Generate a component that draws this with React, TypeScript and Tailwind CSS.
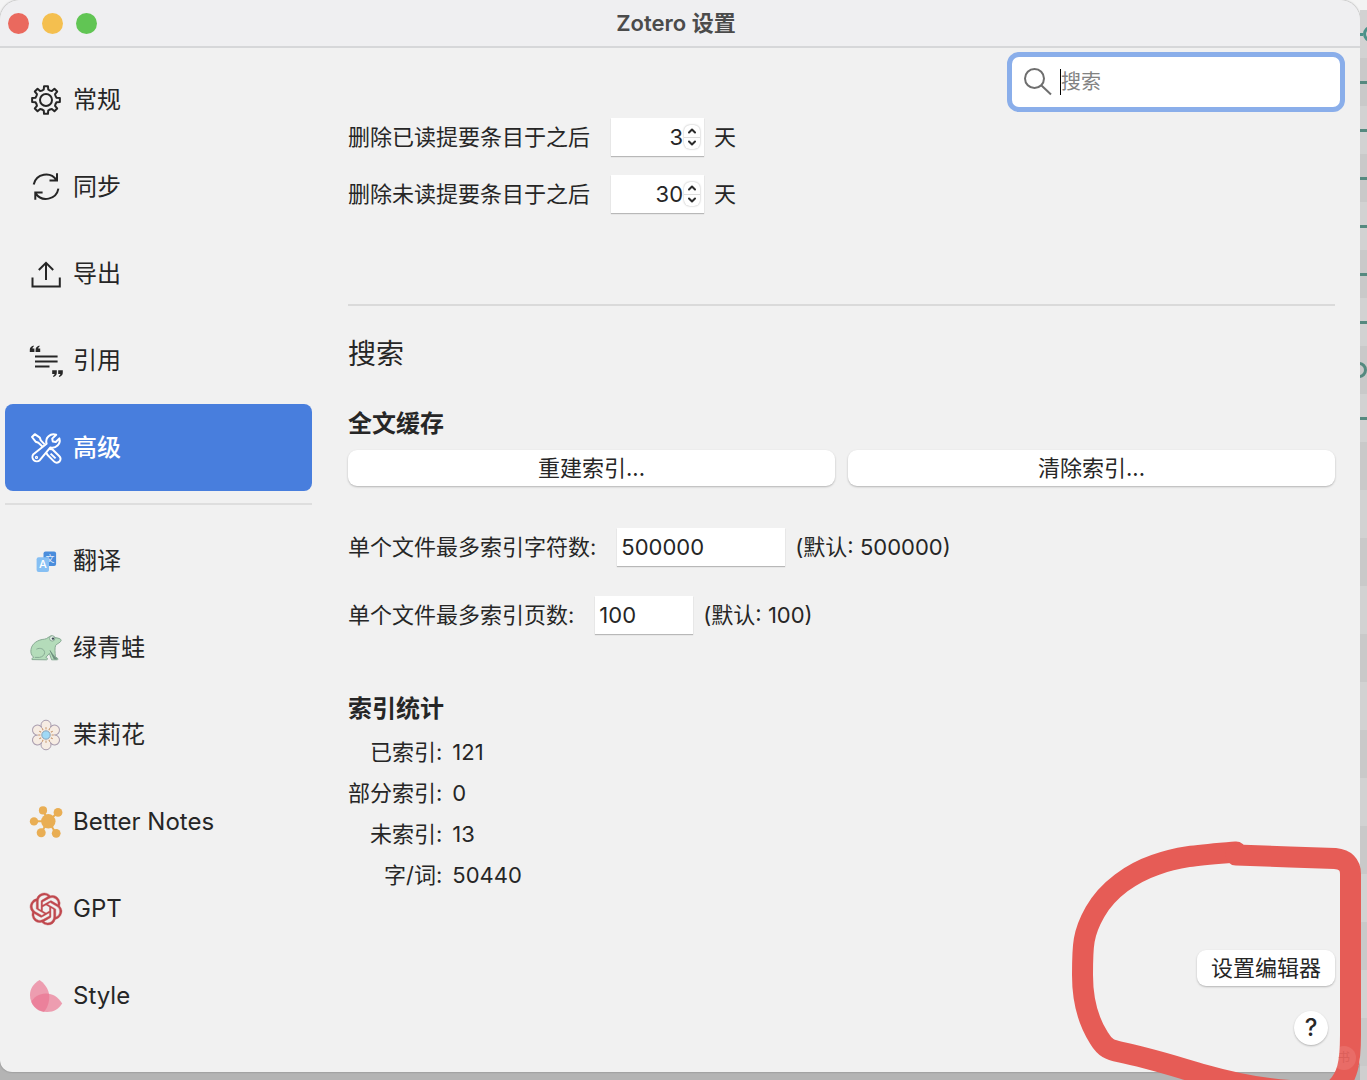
import { useState } from 'react';
import type { ReactNode } from 'react';
import { SiOpenai } from 'react-icons/si';

// 8-tooth outline centred in a 32px box
function gearPath() {
    const point = (r: number, deg: number) => {
        const a = (deg * Math.PI) / 180;
        return `${(16 + r * Math.sin(a)).toFixed(2)} ${(16 - r * Math.cos(a)).toFixed(2)}`;
    };
    const parts: string[] = [];
    for (let i = 0; i < 8; i++) {
        const a = i * 45;
        parts.push(`${i === 0 ? 'M' : 'L'}${point(10.8, a - 12)}`);
        parts.push(`L${point(14, a - 8)}`, `L${point(14, a + 8)}`, `L${point(10.8, a + 12)}`);
        parts.push(`Q${point(10, a + 22.5)} ${point(10.8, a + 33)}`);
    }
    return parts.join('') + 'Z';
}

function Icon({ children, className = '' }: { children: ReactNode; className?: string }) {
    return (
        <svg
            className={`w-8 h-8 flex-shrink-0 overflow-visible ${className}`}
            viewBox="0 0 32 32"
            fill="none"
            stroke="currentColor"
            strokeWidth={2}
            strokeLinejoin="round"
            aria-hidden="true"
        >
            {children}
        </svg>
    );
}

const GeneralIcon = () => (
    <Icon>
        <path d={gearPath()} />
        <circle cx="16" cy="16" r="6" />
    </Icon>
);

const SyncIcon = () => (
    <Icon>
        <path strokeLinejoin="miter" d="M3.7 13.5A12.6 12.6 0 0 1 26.6 9.4M27 2.3V9.6H19.5" />
        <path strokeLinejoin="miter" d="M28.4 17.6A12.6 12.6 0 0 1 5.6 22.4M5.3 28.8V21.6H12.6" />
    </Icon>
);

const ExportIcon = () => (
    <Icon>
        <path strokeLinejoin="miter" d="M16 22V5M8.8 12L16 4.8L23.2 12M2.5 19.6V28.5H29.8V19.6" />
    </Icon>
);

const CiteIcon = () => (
    <Icon>
        <path d="M5 11.6H27.6M5 16.6H27.6M5 21.6H19.5" />
        <path
            fill="currentColor"
            stroke="none"
            d="M3.6 0.6C1 1.4 -0.2 2.8 -0.2 4.8V7H4.4V3.4H2.4C2.5 2.6 3 2 3.8 1.6ZM9.4 0.6C6.8 1.4 5.6 2.8 5.6 4.8V7H10.2V3.4H8.2C8.3 2.6 8.8 2 9.6 1.6Z"
        />
        <path
            fill="currentColor"
            stroke="none"
            d="M22.2 25.2H26.8V27.8C26.8 29.8 25.8 31.2 23.4 32L23 31C24 30.4 24.5 29.8 24.6 29H22.2ZM28.2 25.2H32.8V27.8C32.8 29.8 31.6 31.2 29.2 32L28.8 31C29.8 30.4 30.3 29.8 30.4 29H28.2Z"
        />
    </Icon>
);

const AdvancedIcon = () => (
    <Icon>
        <path d="M26.2 2.8L22.2 6.6L22.8 9.6L25.8 10L29.4 6.4A7.3 7.3 0 0 1 20.4 15.4L9.8 28.2A4.4 4.4 0 0 1 3.4 22.2L16.6 11.8A7.3 7.3 0 0 1 26.2 2.8Z" />
        <circle cx="6.5" cy="25.4" r="0.6" />
        <path d="M12.4 14.4L8.4 10.8L5.8 9.8L2 5L4.8 2.2L9.8 5.6L10.8 8.4L14.6 12.4" />
        <path d="M19.4 17.6C20.4 16.6 22 17 22.8 17.8L29.4 24.2A3.7 3.7 0 0 1 24.2 29.6L17.6 23C16.6 22 16.4 21.4 17 20.4M20.6 21.6L25.6 26.4" />
    </Icon>
);

const TranslateIcon = () => (
    <Icon>
        <g stroke="none">
            <rect x="13.5" y="6.6" width="12.6" height="14.4" rx="2" fill="#4a8ddc" />
            <text x="15.4" y="16.6" fontSize="9" fill="#e4effb">文</text>
            <rect x="6.6" y="12.2" width="12.4" height="14.8" rx="2" fill="#86bff3" />
            <text x="9" y="23.4" fontSize="11" fontWeight="500" fill="#ffffff">A</text>
        </g>
    </Icon>
);

const FrogIcon = () => (
    <Icon>
        <g stroke="#88aa94" strokeWidth={1}>
            <path
                fill="#b4dcba"
                d="M2 27.6C1.6 26.4 2.6 25.6 3.8 25.4C1.4 23.4 0.4 20.6 1 17.4C2 11 8.4 7.6 14.4 7.2C17.4 7 18.6 4.4 21.4 3.8L25 5.6C27.6 6 31 6.6 31.2 8.2C31 10.6 27.2 11.4 25.6 13.4C24.6 16.4 25 20 25.4 24.6L28 26.8C28.2 27.6 27.6 27.8 26.8 27.8H21.6L19.4 21.4L15.8 25.4L17.4 26.4C17.6 27.4 17.2 27.8 16.4 27.8Z"
            />
            <path d="M6.4 17.2C10 15.2 14.4 17 14.6 20.4C14.6 23 12.6 24.8 9.6 25.4H5" />
            <path d="M20 18.4L24.2 27H27" fill="#6f9180" stroke="#6f9180" />
            <circle cx="22.2" cy="6.4" r="2.7" fill="#e3eee6" />
            <circle cx="23" cy="6.6" r="1.2" fill="#3c4a55" stroke="none" />
        </g>
    </Icon>
);

const FlowerIcon = () => {
    const turns = [0, 60, 120, 180, 240, 300];
    return (
        <Icon>
            {turns.map(a => (
                <circle key={a} cx="16" cy="6.2" r="5" fill="#f6ece3" stroke="#a99dae" strokeWidth={1} transform={`rotate(${a} 16 16)`} />
            ))}
            <circle cx="16" cy="16" r="8.4" fill="#f6ece3" stroke="none" />
            {[...turns, 30, 90, 150, 210, 270, 330].map(a => (
                <path key={a} d="M16 10.4V8.2" stroke="#c4946a" strokeWidth={1} transform={`rotate(${a} 16 16)`} />
            ))}
            <circle cx="16" cy="16" r="4.2" fill="#9fd9f6" stroke="#8ba3b8" strokeWidth={1} />
        </Icon>
    );
};

const NotesIcon = () => (
    <Icon className="text-[#e9ae54]">
        <path d="M18.3 15.3L13 4.3M18.3 15.3L28 6.3M18.3 15.3H4M18.3 15.3L11 26.7M18.3 15.3L26 27.3" />
        <g fill="currentColor" stroke="none">
            <circle cx="18.3" cy="15.3" r="7.2" />
            <circle cx="13" cy="4.4" r="4.1" />
            <circle cx="28" cy="6.4" r="4.4" />
            <circle cx="4" cy="15.4" r="4.2" />
            <circle cx="11.2" cy="26.7" r="4.5" />
            <circle cx="26.2" cy="27.3" r="4.4" />
        </g>
    </Icon>
);

const StyleIcon = () => (
    <Icon>
        <g fill="#eb7490" fillOpacity={0.68} stroke="none">
            <path d="M9.5 0C3 4 0 9 0 15C0 24 6 31 14 32C18 27 20 20 19 14C18 8 14 3 9.5 0Z" />
            <path d="M32.2 23.5C28 17 23 13.5 16 13.5C9 13.5 3.4 17.4 1.4 22C4 28 10 32 17 32C24 32 29 28.5 32.2 23.5Z" />
        </g>
    </Icon>
);

interface Pane {
    id: string;
    label: string;
    icon: ReactNode;
}

const builtinPanes: Pane[] = [
    { id: 'general', label: '常规', icon: <GeneralIcon /> },
    { id: 'sync', label: '同步', icon: <SyncIcon /> },
    { id: 'export', label: '导出', icon: <ExportIcon /> },
    { id: 'cite', label: '引用', icon: <CiteIcon /> },
    { id: 'advanced', label: '高级', icon: <AdvancedIcon /> },
];

const pluginPanes: Pane[] = [
    { id: 'translate', label: '翻译', icon: <TranslateIcon /> },
    { id: 'frog', label: '绿青蛙', icon: <FrogIcon /> },
    { id: 'jasmine', label: '茉莉花', icon: <FlowerIcon /> },
    { id: 'notes', label: 'Better Notes', icon: <NotesIcon /> },
    {
        id: 'gpt',
        label: 'GPT',
        icon: <SiOpenai className="w-8 h-8 flex-shrink-0 overflow-visible text-[#c0484e]" stroke="#c0484e" strokeWidth={0.3} aria-hidden="true" />,
    },
    { id: 'style', label: 'Style', icon: <StyleIcon /> },
];

const stats = [
    { label: '已索引:', value: '121' },
    { label: '部分索引:', value: '0' },
    { label: '未索引:', value: '13' },
    { label: '字/词:', value: '50440' },
];

function PaneButton({ pane, selected, onSelect }: { pane: Pane; selected: boolean; onSelect: (id: string) => void }) {
    return (
        <button
            onClick={() => onSelect(pane.id)}
            className={`w-full h-[87px] pl-[25px] flex items-center gap-[11px] rounded-lg text-2xl text-left ${
                selected ? 'bg-[#487edd] text-white font-medium' : 'text-[#262626]'
            }`}
        >
            {pane.icon}
            {pane.label}
        </button>
    );
}

function DaysField({ id, label, initial }: { id: string; label: string; initial: number }) {
    const [days, setDays] = useState(initial);

    return (
        <div className="flex items-center">
            <label htmlFor={id}>{label}</label>
            <div className="ml-[21px] w-[93px] h-[38px] pr-1 flex items-center bg-white shadow-[0_1px_1px_#b8b8b8]">
                <input
                    id={id}
                    type="number"
                    value={days}
                    onChange={e => setDays(Number(e.target.value))}
                    className="flex-1 min-w-0 h-full text-right outline-none [appearance:textfield] [&::-webkit-inner-spin-button]:appearance-none"
                />
                <div className="w-4 h-6 ml-px flex flex-col rounded-md bg-white shadow-[0_0_2px_#a8a8a8]">
                    <button aria-label="增加" onClick={() => setDays(days + 1)} className="flex-1 flex items-center justify-center border-b border-[#dcdcdc]">
                        <svg className="w-2 h-2" viewBox="0 0 8 8" fill="none" stroke="#2b2b2b" strokeWidth={2}>
                            <path strokeLinecap="round" strokeLinejoin="round" d="M1 5.5L4 2.5L7 5.5" />
                        </svg>
                    </button>
                    <button aria-label="减少" onClick={() => setDays(Math.max(0, days - 1))} className="flex-1 flex items-center justify-center">
                        <svg className="w-2 h-2" viewBox="0 0 8 8" fill="none" stroke="#2b2b2b" strokeWidth={2}>
                            <path strokeLinecap="round" strokeLinejoin="round" d="M1 2.5L4 5.5L7 2.5" />
                        </svg>
                    </button>
                </div>
            </div>
            <span className="ml-[10px]">天</span>
        </div>
    );
}

// Sliver of the window behind, with its commit graph
function BackdropStrip() {
    const rows = ['start', 'line', 'line', 'line', 'line', 'line', 'line', 'end', 'line', '', '', '', '', '', '', '', '', '', '', '', '', ''];
    return (
        <div className="w-[7px] flex-shrink-0 relative bg-[#cfcfcf]" aria-hidden="true">
            <div className="absolute inset-0 overflow-hidden">
                <div className="h-[10px] bg-[#f2f2f2]" />
                {rows.map((row, i) => (
                    <div key={i} className={`h-12 flex items-center ${i % 2 === 0 ? 'bg-[#d2d2d2]' : 'bg-[#c9c9c9]'}`}>
                        {row === 'line' && <div className="w-full h-[3px] bg-[#55897f]" />}
                        {row === 'start' && (
                            <>
                                <div className="w-[3px] h-[3px] flex-shrink-0 bg-[#4b9189]" />
                                <div className="w-4 h-4 flex-shrink-0 rounded-full border-3 border-[#4b9189]" />
                            </>
                        )}
                        {row === 'end' && <div className="w-4 h-4 -ml-[9px] flex-shrink-0 rounded-full border-3 border-[#55897f]" />}
                    </div>
                ))}
            </div>
        </div>
    );
}

export default function App() {
    const [selected, setSelected] = useState('advanced');
    const [query, setQuery] = useState('');
    const [maxChars, setMaxChars] = useState('500000');
    const [maxPages, setMaxPages] = useState('100');

    const buttonStyle = 'h-9 rounded-[9px] bg-white shadow-[0_1px_2px_#b4b4b4]';
    const fieldStyle = 'h-[38px] px-1 bg-white outline-none shadow-[0_1px_1px_#b8b8b8]';

    return (
        <div className="relative min-h-screen flex overflow-hidden bg-[linear-gradient(#f4f4f4_50%,#b4b4b4_50%)] font-['Inter','Noto_Sans_CJK_SC',sans-serif] text-[22px] leading-8 text-[#262626]">
            <div className="flex-1 min-w-0 mb-2 flex flex-col rounded-t-[20px] rounded-b-xl bg-[#f1f1f1] shadow-[0_0_2px_#777777]">
                <header className="h-12 pl-2 flex items-center border-b-2 border-[#d6d7d9] bg-[#efeff1] rounded-t-[20px]">
                    <div className="flex-1 flex gap-[13px]">
                        <button aria-label="关闭" className="w-[21px] h-[21px] rounded-full bg-[#ea695e]" />
                        <button aria-label="最小化" className="w-[21px] h-[21px] rounded-full bg-[#f4bf4f]" />
                        <button aria-label="缩放" className="w-[21px] h-[21px] rounded-full bg-[#61c554]" />
                    </div>
                    <h1 className="font-semibold text-[#4b4b4b]">Zotero 设置</h1>
                    <div className="flex-1 mr-4" />
                </header>

                <div className="flex-1 flex">
                    <nav className="w-[312px] flex-shrink-0 pl-[5px] pt-2">
                        {builtinPanes.map(pane => (
                            <PaneButton key={pane.id} pane={pane} selected={pane.id === selected} onSelect={setSelected} />
                        ))}
                        <hr className="my-3 border-t-2 border-[#dedede]" />
                        {pluginPanes.map(pane => (
                            <PaneButton key={pane.id} pane={pane} selected={pane.id === selected} onSelect={setSelected} />
                        ))}
                    </nav>

                    <main className="flex-1 min-w-0 pl-9 pr-[15px] pt-1 pb-[27px] flex flex-col">
                        <label className="self-end w-[338px] h-[60px] pl-3 flex items-center rounded-xl border-5 border-[#8aaeea] bg-white text-xl">
                            <svg className="w-7 h-7 flex-shrink-0" viewBox="0 0 28 28" fill="none" stroke="#6e6e6e" strokeWidth={2} aria-hidden="true">
                                <circle cx="10.5" cy="10.5" r="9.5" />
                                <path d="M17.5 17.5L27 26.5" />
                            </svg>
                            <span className="w-px h-[26px] ml-2 bg-black" aria-hidden="true" />
                            <input
                                type="text"
                                aria-label="搜索"
                                placeholder="搜索"
                                value={query}
                                onChange={e => setQuery(e.target.value)}
                                className="flex-1 min-w-0 outline-none placeholder:text-[#828282]"
                            />
                        </label>

                        <div className="flex-1 pr-[10px] flex flex-col">
                            <div className="mt-[6px] flex flex-col gap-[19px]">
                                <DaysField id="read-days" label="删除已读提要条目于之后" initial={3} />
                                <DaysField id="unread-days" label="删除未读提要条目于之后" initial={30} />
                            </div>

                            <hr className="mt-[91px] border-t-2 border-[#dadada]" />

                            <h2 className="mt-7 text-[28px] leading-10">搜索</h2>

                            <h3 className="mt-[34px] text-2xl leading-8 font-bold">全文缓存</h3>
                            <div className="mt-[10px] grid grid-cols-2 gap-[13px]">
                                <button className={buttonStyle}>重建索引...</button>
                                <button className={buttonStyle}>清除索引...</button>
                            </div>

                            <div className="mt-[42px] flex items-center">
                                <label htmlFor="max-chars">单个文件最多索引字符数:</label>
                                <input
                                    id="max-chars"
                                    type="text"
                                    value={maxChars}
                                    onChange={e => setMaxChars(e.target.value)}
                                    className={`ml-[21px] w-[168px] ${fieldStyle}`}
                                />
                                <span className="ml-[10px]">(默认: 500000)</span>
                            </div>
                            <div className="mt-[30px] flex items-center">
                                <label htmlFor="max-pages">单个文件最多索引页数:</label>
                                <input
                                    id="max-pages"
                                    type="text"
                                    value={maxPages}
                                    onChange={e => setMaxPages(e.target.value)}
                                    className={`ml-[21px] w-[98px] ${fieldStyle}`}
                                />
                                <span className="ml-[10px]">(默认: 100)</span>
                            </div>

                            <h3 className="mt-[59px] text-2xl leading-8 font-bold">索引统计</h3>
                            <table className="mt-[6px] self-start">
                                <tbody>
                                    {stats.map(row => (
                                        <tr key={row.label} className="h-[41px]">
                                            <th scope="row" className="pr-[10px] font-normal text-right">{row.label}</th>
                                            <td>{row.value}</td>
                                        </tr>
                                    ))}
                                </tbody>
                            </table>

                            <div className="mt-auto pt-12 flex flex-col items-end">
                                <button className={`w-[138px] ${buttonStyle}`}>设置编辑器</button>
                                <button
                                    aria-label="帮助"
                                    className="w-[34px] h-[34px] mt-[25px] mr-[7px] rounded-full bg-white shadow-[0_1px_2px_#b4b4b4] text-2xl font-medium flex items-center justify-center"
                                >
                                    ?
                                </button>
                            </div>
                        </div>
                    </main>
                </div>
            </div>

            <BackdropStrip />

            {/* hand-drawn marker around the editor button */}
            <svg
                className="absolute right-0 bottom-0 w-[302px] h-[245px] pointer-events-none"
                viewBox="1065 835 302 245"
                fill="none"
                stroke="#e65c56"
                strokeWidth={21}
                strokeLinecap="round"
                strokeLinejoin="round"
                aria-hidden="true"
            >
                <path d="M1236 852C1200 855 1180 856 1155 865C1132 873 1108 889 1095 912C1083 933 1082.500 945 1082.500 975C1082.500 1002 1090 1024 1099 1038C1105 1048 1110 1050 1120 1052C1150 1058 1180 1068 1205 1075C1240 1085 1270 1090 1300 1091" />
                <path d="M1236 855L1290 857L1335 858.500Q1350.500 860 1350.500 874V1035C1350.500 1062 1348 1078 1334 1090" />
            </svg>
            <span className="absolute right-[11px] bottom-[10px] w-6 h-6 rounded-full bg-white/10 text-xs leading-6 text-center text-[#c44a46]/40 select-none">书</span>
        </div>
    );
}
